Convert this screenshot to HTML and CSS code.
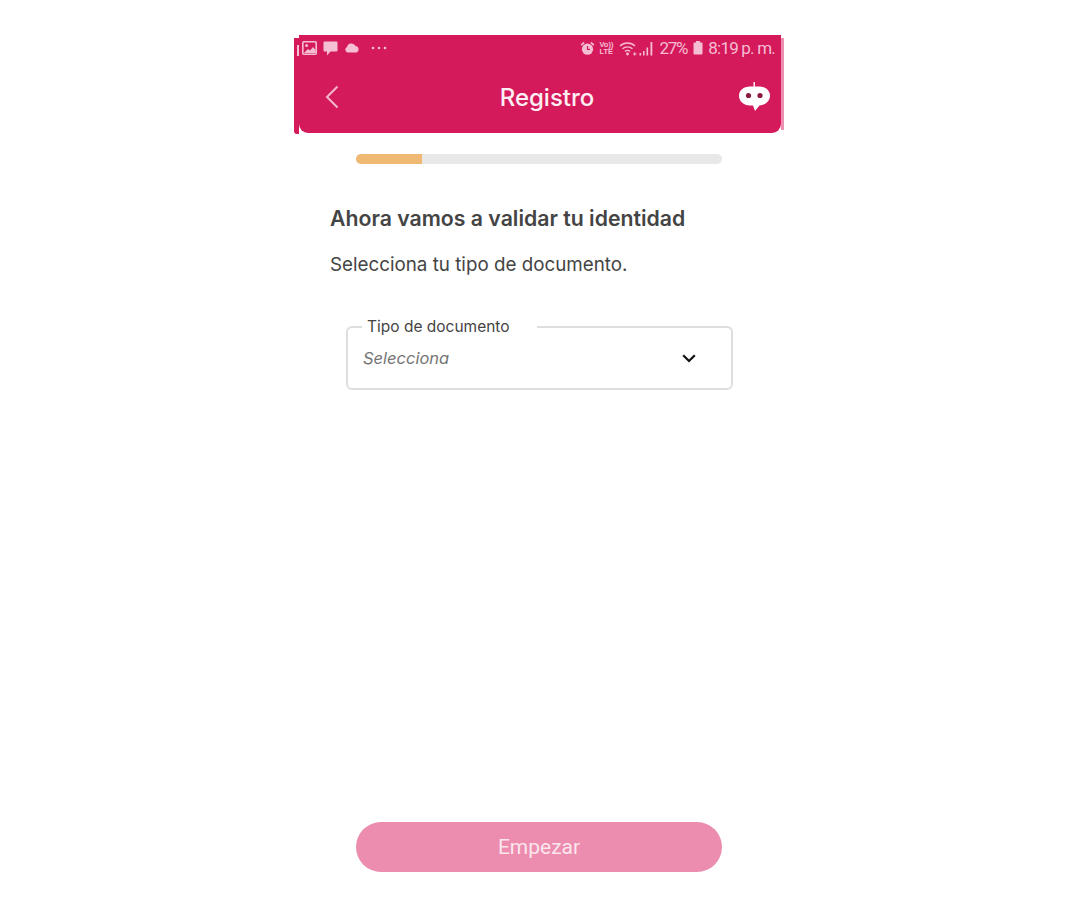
FILE: index.html
```html
<!DOCTYPE html>
<html lang="es">
<head>
    <meta charset="UTF-8">
    <meta name="viewport" content="width=device-width, initial-scale=1.0">
    <title>Registro</title>
    <link rel="stylesheet" href="styles.css">
</head>
<body>
    <div class="screen">
        <header class="app-header">
            <!-- Android status bar -->
            <div class="status-bar">
                <div class="status-left">
                    <svg width="15" height="14" viewBox="0 0 15 14"><rect x="0.8" y="0.8" width="13.4" height="12.4" rx="1" fill="none" stroke="#f6bed3" stroke-width="1.6"/><circle cx="4.6" cy="4.6" r="1.5" fill="#f6bed3"/><path d="M2 12 L6 8 L8 9.5 L11 6 L13.5 9 L13.5 12 Z" fill="#f6bed3"/></svg>
                    <svg width="15" height="15" viewBox="0 0 15 15"><path d="M1.5 0.5 H13.5 A1 1 0 0 1 14.5 1.5 V9.5 A1 1 0 0 1 13.5 10.5 H7.5 L4 14.5 V10.5 H1.5 A1 1 0 0 1 0.5 9.5 V1.5 A1 1 0 0 1 1.5 0.5 Z" fill="#f6bed3"/></svg>
                    <svg width="16" height="10" viewBox="0 0 16 10"><path d="M3.5 9.5 A3 3 0 0 1 3 3.9 A4.6 4.6 0 0 1 11.6 3 A3.4 3.4 0 0 1 12.6 9.5 Z" fill="#f6bed3"/></svg>
                    <svg class="status-dots" width="16" height="4" viewBox="0 0 16 4"><circle cx="2" cy="2" r="1.3" fill="#f6bed3"/><circle cx="8" cy="2" r="1.3" fill="#f6bed3"/><circle cx="14" cy="2" r="1.3" fill="#f6bed3"/></svg>
                </div>
                <div class="status-right">
                    <svg class="st-alarm" width="15" height="15" viewBox="0 0 15 15"><circle cx="7.5" cy="8.2" r="5.6" fill="#f6bed3"/><path d="M0.6 3.6 L3.4 0.9 L4.8 2 L1.8 4.8 Z M14.4 3.6 L11.6 0.9 L10.2 2 L13.2 4.8 Z" fill="#f6bed3"/><path d="M7.5 5 V8.4 H10" fill="none" stroke="#d51a5c" stroke-width="1.2"/></svg>
                    <span class="st-volte">Vo)) <br>LTE</span>
                    <svg class="st-wifi" width="18" height="15" viewBox="0 0 18 15"><path d="M1 5 A11 11 0 0 1 16 5 M3.5 7.8 A7.5 7.5 0 0 1 13.5 7.8 M6 10.4 A4 4 0 0 1 11 10.4" fill="none" stroke="#f6bed3" stroke-width="1.4"/><circle cx="8.5" cy="13" r="1.4" fill="#f6bed3"/><path d="M14 13 h3.5 M15.7 11.2 v3.4" stroke="#f6bed3" stroke-width="1"/></svg>
                    <svg class="st-signal" width="15" height="15" viewBox="0 0 15 15"><rect x="0.5" y="12" width="1.6" height="2.5" fill="#f6bed3"/><rect x="4" y="10" width="1.6" height="4.5" fill="#f6bed3"/><rect x="7.5" y="6.5" width="1.6" height="8" fill="#f6bed3"/><rect x="11.5" y="1" width="1.8" height="13.5" fill="#f6bed3"/></svg>
                    <span class="st-text st-pct">27%</span>
                    <svg class="st-batt" width="10" height="14" viewBox="0 0 10 14"><rect x="3" y="0" width="4" height="2" fill="#f6bed3"/><rect x="0.5" y="1.5" width="9" height="12" rx="1" fill="#f6bed3"/></svg>
                    <span class="st-text st-time">8:19 p. m.</span>
                </div>
            </div>

            <div class="title-row">
                <svg class="back-icon" width="14" height="24" viewBox="0 0 14 24"><path d="M12.5 1.5 L2 12 L12.5 22.5" fill="none" stroke="#f3b6cc" stroke-width="2"/></svg>
                <h1 class="page-title">Registro</h1>
                <svg class="bot-icon" width="31" height="30" viewBox="0 0 31 30">
                    <path d="M15.2 0 V6" stroke="#fff" stroke-width="1.4"/>
                    <path d="M11 4.5 H20 C26.5 4.5 31 8.5 31 13.5 C31 19 26.5 23 20.5 23.5 L16 29 L14 23.6 H11 C4.5 23.6 0 19 0 13.8 C0 8.5 4.5 4.5 11 4.5 Z" fill="#fff"/>
                    <circle cx="9.5" cy="13.5" r="2.6" fill="#8a1a40"/>
                    <circle cx="21" cy="13.5" r="2.6" fill="#8a1a40"/>
                </svg>
            </div>
        </header>

        <div class="progress">
            <div class="progress-fill" style="width: 18%"></div>
        </div>

        <main class="content">
            <h2 class="heading">Ahora vamos a validar tu identidad</h2>
            <p class="subtext">Selecciona tu tipo de documento.</p>

            <fieldset class="doc-field">
                <legend>Tipo de documento</legend>
                <div class="doc-select">
                    <span class="placeholder">Selecciona</span>
                    <svg width="14" height="9" viewBox="0 0 14 9"><path d="M1.2 1.2 L7 7 L12.8 1.2" fill="none" stroke="#111" stroke-width="2.2"/></svg>
                </div>
            </fieldset>
        </main>

        <button type="button" class="start-btn">Empezar</button>
    </div>
</body>
</html>
```

FILE: styles.css
```css
/* Registro screen */
* {
    box-sizing: border-box;
}

body {
    margin: 0;
    background-color: #fff;
    font-family: "Inter", "Liberation Sans", sans-serif;
    color: #444;
}

.screen {
    width: 482px;
    height: 909px;
    margin-left: 299px;
    padding-top: 35px;
}

/* Header */
.app-header {
    position: relative;
    height: 98px;
    background-color: #d51a5c;
    border-radius: 0 0 9px 9px;
}

/* Rough edges of the cropped screenshot */
.app-header::before {
    content: "";
    position: absolute;
    top: 3px;
    bottom: -1px;
    left: -5px;
    width: 5px;
    background-color: #d51a5c;
    border-radius: 0 0 0 3px;
}

.app-header::after {
    content: "";
    position: absolute;
    top: 3px;
    bottom: 3px;
    right: -3px;
    width: 3px;
    background-color: #ee8fb0;
}

.status-bar {
    position: relative;
    display: flex;
    justify-content: space-between;
    align-items: center;
    height: 26px;
    padding: 0 6px 0 3px;
}

.status-bar::before {
    content: "";
    position: absolute;
    top: 10px;
    left: -2px;
    width: 1.5px;
    height: 11px;
    background-color: #f6bed3;
}

.status-left,
.status-right {
    display: flex;
    align-items: center;
}

.status-left {
    gap: 6px;
}

.status-dots {
    margin-left: 5px;
}

.st-alarm {
    margin-right: 4px;
}

.st-volte {
    width: 18px;
    font-family: "Liberation Sans", sans-serif;
    font-size: 7.5px;
    font-weight: bold;
    line-height: 7px;
    color: #f6bed3;
    white-space: nowrap;
}

.st-wifi {
    margin-left: 2px;
}

.st-signal {
    margin-left: 2px;
}

.st-text {
    font-family: "Roboto", sans-serif;
    font-size: 17px;
    color: #f6bed3;
    white-space: nowrap;
}

.st-pct {
    margin-left: 5px;
    letter-spacing: -1.2px;
}

.st-batt {
    margin-left: 6px;
}

.st-time {
    margin-left: 5px;
    letter-spacing: -0.8px;
}

.title-row {
    display: flex;
    align-items: center;
    height: 68px;
    padding: 4px 11px 0 26px;
}

.back-icon {
    flex-shrink: 0;
}

.page-title {
    flex: 1;
    margin: 0;
    padding-left: 16px;
    font-size: 24px;
    font-weight: 500;
    text-align: center;
    color: #fdeef3;
}

.bot-icon {
    flex-shrink: 0;
}

/* Progress bar */
.progress {
    width: 366px;
    height: 10px;
    margin: 21px 0 0 57px;
    background-color: #e8e8e8;
    border-radius: 5px;
    overflow: hidden;
}

.progress-fill {
    height: 100%;
    background-color: #efb974;
}

/* Content */
.content {
    padding-left: 31px;
}

.heading {
    margin: 40px 0 0;
    font-size: 21.25px;
    font-weight: 600;
    line-height: 28px;
}

.subtext {
    margin: 20px 0 0;
    font-size: 18.8px;
    line-height: 26px;
}

.doc-field {
    width: 387px;
    height: 72px;
    margin: 40px 0 0 16px;
    padding: 0 15px;
    border: 2px solid #dedede;
    border-radius: 6px;
}

.doc-field legend {
    margin-left: -1px;
    padding: 0 27px 0 5px;
    font-size: 15.5px;
    line-height: 18px;
}

.doc-select {
    display: flex;
    justify-content: space-between;
    align-items: center;
    height: 26px;
    margin-top: 9px;
    padding-right: 20px;
}

.placeholder {
    font-size: 16.5px;
    font-style: italic;
    color: #757575;
}

/* Disabled looking button */
.start-btn {
    display: block;
    width: 366px;
    height: 50px;
    margin: 432px 0 0 57px;
    border: none;
    border-radius: 25px;
    background-color: #ec8cae;
    font-family: "Roboto", sans-serif;
    font-size: 21px;
    color: #fbe6ee;
}
```
